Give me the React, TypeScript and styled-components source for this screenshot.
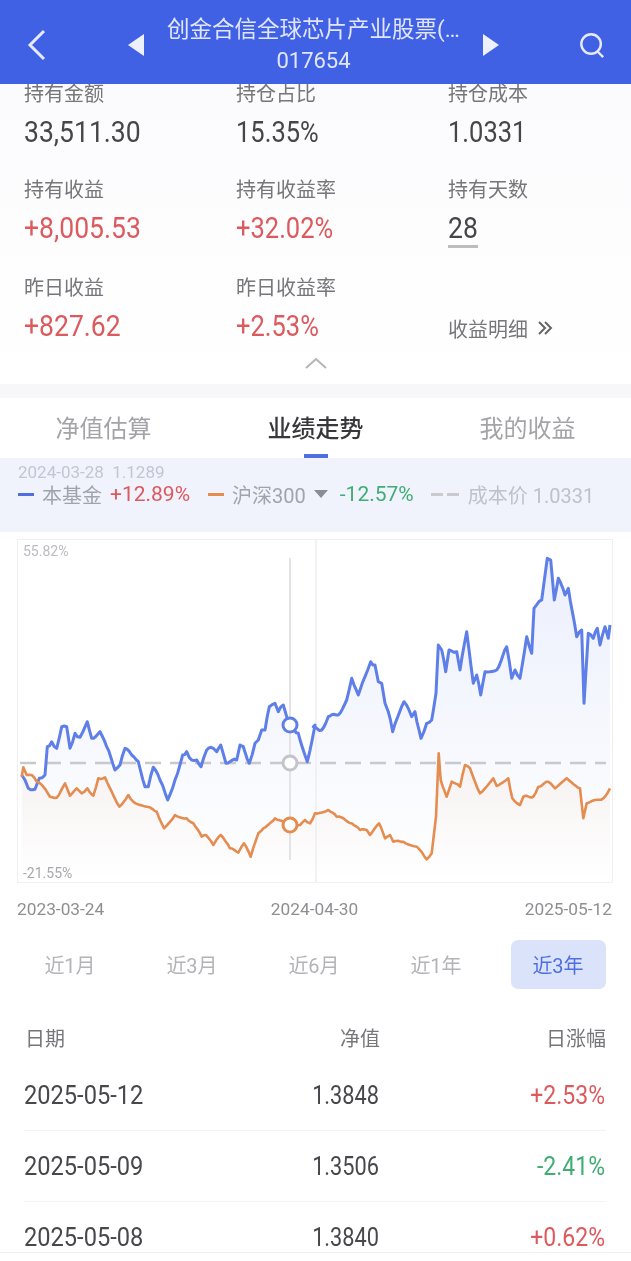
import styled, { createGlobalStyle } from 'styled-components';

const GlobalStyle = createGlobalStyle`
  html, body {
    margin: 0;
    padding: 0;
    background: #fff;
  }
  * {
    box-sizing: border-box;
  }
`;

const FONT = `Roboto, "Noto Sans CJK SC", sans-serif`;
const RED = '#dc5a5e';
const GREEN = '#41ad74';
const BLUE = '#5f7fe8';
const ORANGE = '#e58c50';

// traced from the reference, [x, y] pairs at 3x around the crop origin
const blueA = [65,735,75,750,85,775,105,778,118,745,135,735,142,650,155,635,170,655,185,590,200,590,210,655,225,610,240,622,262,575,275,625,300,605,320,650,345,720,360,705,375,655,395,675,415,695,435,770,445,770,460,712,480,750,503,810,525,750,548,675,560,665,575,690,590,690,603,710,620,660,640,655,650,665,662,645,678,700,710,690,720,645,730,650,748,700,765,640,775,630,785,600,795,600,808,530,825,520,835,545,850,525,860,560,870,585,895,610,922,695,945,585];
const blueB = [10,590,35,600,55,560,85,555,110,510,125,445,145,495,165,440,182,395,195,405,205,455,215,460,225,520,235,545,248,605,282,515,305,560,315,545,333,625,350,580,365,570,378,490,385,345,395,360,407,425,417,360,440,365,450,420,470,305,490,460,500,435,512,495,525,425,560,420,590,350,605,445,615,420,630,445,650,320,665,370,672,235,695,210,712,85,722,90,733,210,745,145,765,195,775,175,800,320,815,300,822,520,835,310,850,325,862,295,870,345,885,290,895,325,900,285];
const orangeA = [65,740,70,712,80,735,95,735,110,755,130,770,150,800,170,803,195,760,210,797,230,775,245,790,262,775,280,797,295,745,315,742,335,785,358,830,385,795,400,815,440,830,470,845,492,895,525,855,560,865,580,880,605,920,618,915,640,945,662,915,690,955,715,968,732,940,752,980,775,910,790,895,825,865,870,885,900,885,915,870,930,880,945,850];
const orangeB = [15,850,55,840,80,860,100,865,125,880,150,900,170,900,180,915,207,880,225,925,240,915,250,935,280,935,320,950,350,988,365,970,378,860,386,670,392,750,410,800,425,755,450,770,465,705,480,715,495,755,510,790,550,745,560,768,595,745,607,805,630,825,640,800,670,800,685,770,715,755,735,775,770,745,810,775,820,865,830,820,880,805,900,775];

// the traced points miss the day-to-day wobble, so add a small repeatable one between them
const toPoints = (left: number[], right: number[], wobble: number) => {
  const pts: number[][] = [];
  for (let i = 0; i < left.length; i += 2) pts.push([left[i] / 3, 530 + left[i + 1] / 3]);
  for (let i = 0; i < right.length; i += 2) pts.push([310 + right[i] / 3, 530 + right[i + 1] / 3]);
  const out: string[] = [];
  pts.forEach((p, i) => {
    out.push(`${p[0].toFixed(1)},${p[1].toFixed(1)}`);
    const next = pts[i + 1];
    if (!next || next[0] - p[0] < 4) return;
    const steps = Math.floor((next[0] - p[0]) / 2);
    for (let s = 1; s < steps; s++) {
      const t = s / steps;
      const x = p[0] + (next[0] - p[0]) * t;
      const y = p[1] + (next[1] - p[1]) * t + Math.sin(x * 2.7) * wobble;
      out.push(`${x.toFixed(1)},${y.toFixed(1)}`);
    }
  });
  return out.join(' ');
};

const bluePoints = toPoints(blueA, blueB, 1.6);
const orangePoints = toPoints(orangeA, orangeB, 0.9);

const stats = [
  [
    { label: '持有金额', value: '33,511.30' },
    { label: '持仓占比', value: '15.35%', narrow: true },
    { label: '持仓成本', value: '1.0331', narrow: true },
  ],
  [
    { label: '持有收益', value: '+8,005.53', up: true },
    { label: '持有收益率', value: '+32.02%', up: true, narrow: true },
    { label: '持有天数', value: '28', underline: true },
  ],
];

const periods = ['近1月', '近3月', '近6月', '近1年', '近3年'];

const rows = [
  { date: '2025-05-12', nav: '1.3848', change: '+2.53%', color: RED },
  { date: '2025-05-09', nav: '1.3506', change: '-2.41%', color: GREEN },
  { date: '2025-05-08', nav: '1.3840', change: '+0.62%', color: RED },
];

function App() {
  return (
    <Page>
      <GlobalStyle />
      <Header>
        <IconSlot>
          <svg width="22" height="32" viewBox="0 0 22 32" fill="none" stroke="#e6eafc" strokeWidth="3">
            <path d="M18 2 L4 16 L18 30" />
          </svg>
        </IconSlot>
        <Triangle viewBox="0 0 16 22"><path d="M16 0 V22 L0 11 Z" /></Triangle>
        <TitleBlock>
          <Title>创金合信全球芯片产业股票(…</Title>
          <Code>017654</Code>
        </TitleBlock>
        <Triangle viewBox="0 0 16 22"><path d="M0 0 V22 L16 11 Z" /></Triangle>
        <IconSlot>
          <svg width="28" height="28" viewBox="0 0 28 28" fill="none" stroke="#e6eafc" strokeWidth="2.6">
            <circle cx="13" cy="13" r="10.5" />
            <path d="M20 21 L26 27" />
          </svg>
        </IconSlot>
      </Header>

      <Stats>
        {stats.map((row, i) => (
          <StatRow key={i}>
            {row.map((cell) => (
              <div key={cell.label}>
                <StatLabel>{cell.label}</StatLabel>
                <StatValue $up={cell.up} $underline={cell.underline} $narrow={cell.narrow}>{cell.value}</StatValue>
              </div>
            ))}
          </StatRow>
        ))}
        <StatRow>
          <div>
            <StatLabel>昨日收益</StatLabel>
            <StatValue $up>+827.62</StatValue>
          </div>
          <div>
            <StatLabel>昨日收益率</StatLabel>
            <StatValue $up $narrow>+2.53%</StatValue>
          </div>
          <DetailLink>
            收益明细
            <svg width="16" height="16" viewBox="0 0 16 16" fill="none" stroke="#666" strokeWidth="2">
              <path d="M2 2 L8 8 L2 14 M8 2 L14 8 L8 14" />
            </svg>
          </DetailLink>
        </StatRow>
        <Collapse>
          <svg width="22" height="12" viewBox="0 0 22 12" fill="none" stroke="#b5b5b8" strokeWidth="2">
            <path d="M1 11 L11 2 L21 11" />
          </svg>
        </Collapse>
      </Stats>
      <Band />

      <Tabs>
        <Tab>净值估算</Tab>
        <Tab $active>业绩走势</Tab>
        <Tab>我的收益</Tab>
      </Tabs>

      <LegendPanel>
        <PointInfo>2024-03-28&nbsp;&nbsp;1.1289</PointInfo>
        <LegendRow>
          <Dash $color="#4f6fe0" />
          <LegendName>本基金</LegendName>
          <LegendNumber $color={RED}>+12.89%</LegendNumber>
          <Dash $color={ORANGE} $gap={18} />
          <LegendName>沪深300</LegendName>
          <LegendCaret />
          <LegendNumber $color={GREEN}>-12.57%</LegendNumber>
          <Dash $color="#c9c9ce" $gap={17} $short />
          <Dash $color="#c9c9ce" $short />
          <CostLabel>成本价 1.0331</CostLabel>
        </LegendRow>
      </LegendPanel>

      <ChartBox>
        <AxisTop>55.82%</AxisTop>
        <AxisBottom>-21.55%</AxisBottom>
        <svg width="594" height="342" viewBox="18 540 594 342" fill="none">
          <defs>
            <linearGradient id="blueFill" x1="0" y1="0" x2="0" y2="1">
              <stop offset="0" stopColor="#5f7fe8" stopOpacity="0.12" />
              <stop offset="1" stopColor="#5f7fe8" stopOpacity="0" />
            </linearGradient>
            <linearGradient id="orangeFill" x1="0" y1="0" x2="0" y2="1">
              <stop offset="0" stopColor="#e58c50" stopOpacity="0.08" />
              <stop offset="1" stopColor="#e58c50" stopOpacity="0" />
            </linearGradient>
          </defs>
          <polygon points={`21.7,880 ${bluePoints} 610,880`} fill="url(#blueFill)" />
          <polygon points={`21.7,880 ${orangePoints} 610,880`} fill="url(#orangeFill)" />
          <path d="M316 540 V882" stroke="#eeeef2" strokeWidth="1.5" />
          <path d="M290 558 V860" stroke="#e3e3e8" strokeWidth="2" />
          <path d="M20 763 H606" stroke="#c8c8cd" strokeWidth="2.5" strokeDasharray="16 9" />
          <polyline points={bluePoints} stroke={BLUE} strokeWidth="3" strokeLinejoin="round" />
          <polyline points={orangePoints} stroke={ORANGE} strokeWidth="2.6" strokeLinejoin="round" />
          <circle cx="290" cy="725" r="7" fill="#fff" stroke={BLUE} strokeWidth="3" />
          <circle cx="290" cy="763" r="7" fill="#fff" stroke="#c4c4c9" strokeWidth="3" />
          <circle cx="290" cy="825" r="7" fill="#fff" stroke={ORANGE} strokeWidth="3" />
        </svg>
      </ChartBox>

      <AxisDates>
        <span>2023-03-24</span>
        <span>2024-04-30</span>
        <span>2025-05-12</span>
      </AxisDates>

      <Periods>
        {periods.map((p) => (
          <Period key={p} $active={p === '近3年'}>{p}</Period>
        ))}
      </Periods>

      <TableHead>
        <span>日期</span>
        <HeadRight>净值</HeadRight>
        <HeadRight>日涨幅</HeadRight>
      </TableHead>
      {rows.map((r) => (
        <TableRow key={r.date}>
          <DateCell>{r.date}</DateCell>
          <NavCell>{r.nav}</NavCell>
          <ChangeCell $color={r.color}>{r.change}</ChangeCell>
        </TableRow>
      ))}
      <BottomEdge />
    </Page>
  );
}

export default App;

const Page = styled.div`
  position: relative;
  width: 631px;
  height: 1261px;
  overflow: hidden;
  background: #fff;
  font-family: ${FONT};
  filter: blur(0.6px);
`;

const Header = styled.div`
  position: relative;
  z-index: 2;
  display: flex;
  align-items: center;
  height: 84px;
  padding: 6px 26px 0 26px;
  background: #4161e4;
`;

const IconSlot = styled.div`
  display: flex;
  align-items: center;
  width: 26px;
  flex-shrink: 0;
`;

const Triangle = styled.svg`
  width: 16px;
  height: 22px;
  margin-left: 76px;
  margin-right: 0;
  fill: #eef1fd;
  flex-shrink: 0;

  & + div + & {
    margin-left: 0;
    margin-right: 80px;
  }
`;

const TitleBlock = styled.div`
  flex: 1;
  min-width: 0;
  display: flex;
  flex-direction: column;
  align-items: center;
  color: #e1e6fb;
`;

const Title = styled.div`
  font-size: 22.5px;
  line-height: 31px;
  white-space: nowrap;
`;

const Code = styled.div`
  font-size: 22px;
  line-height: 31px;
`;

const Stats = styled.div`
  margin-top: -2px;
  padding: 0 0 0 24px;
  background: linear-gradient(#fbfbfd, #ffffff);
`;

const StatRow = styled.div`
  display: grid;
  grid-template-columns: 212px 212px 1fr;
  height: 67px;
  margin-bottom: 29px;

  &:nth-child(2) {
    margin-bottom: 31px;
  }

  &:nth-child(3) {
    margin-bottom: 0;
  }
`;

const StatLabel = styled.div`
  font-size: 20px;
  line-height: 24px;
  color: #76767b;
`;

// the reference digits are a narrow DIN cut, Roboto squeezed sideways is the nearest we have
const StatValue = styled.div<{ $up?: boolean; $underline?: boolean; $narrow?: boolean }>`
  display: table;
  margin-top: 9px;
  font-size: 30px;
  line-height: 34px;
  transform: scaleX(${(p) => (p.$narrow ? 0.85 : 0.885)});
  transform-origin: left center;
  color: ${(p) => (p.$up ? RED : '#45454a')};
  border-bottom: ${(p) => (p.$underline ? '3px solid #bdbdc0' : 'none')};
`;

const DetailLink = styled.div`
  display: flex;
  align-items: center;
  gap: 9px;
  align-self: end;
  height: 30px;
  font-size: 20px;
  color: #77777b;
`;

const Collapse = styled.div`
  display: flex;
  justify-content: center;
  align-items: center;
  height: 41px;
  margin-left: -24px;
  padding-bottom: 1px;
`;

const Band = styled.div`
  height: 14px;
  background: #f7f7f9;
`;

const Tabs = styled.div`
  display: grid;
  grid-template-columns: repeat(3, 212px);
  justify-content: center;
  height: 60px;
`;

const Tab = styled.div<{ $active?: boolean }>`
  position: relative;
  display: flex;
  justify-content: center;
  align-items: center;
  padding-bottom: 4px;
  font-size: 24px;
  font-weight: ${(p) => (p.$active ? 500 : 400)};
  color: ${(p) => (p.$active ? '#38383c' : '#a4a4a8')};

  &::after {
    content: '';
    display: ${(p) => (p.$active ? 'block' : 'none')};
    position: absolute;
    bottom: 0;
    left: 50%;
    width: 24px;
    height: 4px;
    margin-left: -12px;
    background: #4f6fe0;
  }
`;

const LegendPanel = styled.div`
  height: 74px;
  padding: 5px 18px 0;
  background: #f0f3fc;
`;

const PointInfo = styled.div`
  font-size: 17px;
  line-height: 19px;
  color: #c3c6d1;
`;

const LegendRow = styled.div`
  display: flex;
  align-items: center;
  height: 24px;
  white-space: nowrap;
`;

const Dash = styled.i<{ $color: string; $gap?: number; $short?: boolean }>`
  display: block;
  width: ${(p) => (p.$short ? 12 : 16)}px;
  height: 3px;
  margin-left: ${(p) => p.$gap ?? 0}px;
  margin-right: ${(p) => (p.$short ? 4 : 8)}px;
  background: ${(p) => p.$color};
`;

const LegendName = styled.span`
  font-size: 20px;
  color: #a2a3aa;
`;

const LegendNumber = styled.span<{ $color: string }>`
  margin-left: 8px;
  font-size: 21px;
  color: ${(p) => p.$color};
`;

const LegendCaret = styled.i`
  width: 0;
  height: 0;
  margin-left: 8px;
  margin-right: 4px;
  border-left: 7px solid transparent;
  border-right: 7px solid transparent;
  border-top: 8px solid #8c8d93;
`;

const CostLabel = styled.span`
  margin-left: 5px;
  font-size: 20px;
  color: #c0c1c8;
`;

const ChartBox = styled.div`
  position: relative;
  width: 594px;
  height: 342px;
  margin: 8px 0 0 18px;
  outline: 1px solid #f0f0f4;

  svg {
    display: block;
    overflow: visible;
  }
`;

const AxisTop = styled.span`
  position: absolute;
  top: 3px;
  left: 5px;
  font-size: 14px;
  color: #bcbcc0;
`;

const AxisBottom = styled.span`
  position: absolute;
  bottom: 1px;
  left: 5px;
  font-size: 14px;
  color: #a8a8ac;
`;

const AxisDates = styled.div`
  display: flex;
  justify-content: space-between;
  margin: 17px 19px 0 17px;
  font-size: 17.3px;
  line-height: 20px;
  color: #8f8f93;
`;

const Periods = styled.div`
  display: grid;
  grid-template-columns: repeat(5, 122px);
  margin: 21px 0 0 9px;
`;

const Period = styled.div<{ $active?: boolean }>`
  justify-self: center;
  display: flex;
  justify-content: center;
  align-items: center;
  width: 95px;
  height: 49px;
  border-radius: 7px;
  font-size: 20px;
  background: ${(p) => (p.$active ? '#dbe3fb' : 'transparent')};
  color: ${(p) => (p.$active ? '#4f6fe0' : '#b4b4b8')};
`;

const TableHead = styled.div`
  display: grid;
  grid-template-columns: 200px 155px 226px;
  margin: 36px 25px 7px;
  font-size: 20px;
  line-height: 28px;
  color: #77777b;
`;

const HeadRight = styled.span`
  text-align: right;
`;

const TableRow = styled.div`
  display: grid;
  grid-template-columns: 200px 155px 226px;
  align-items: center;
  height: 71px;
  margin: 0 25px 0 24px;
  font-size: 25px;
  color: #48484c;
  border-bottom: 1px solid #f4f4f6;
`;

const DateCell = styled.span`
  transform: scaleX(0.945);
  transform-origin: left center;
`;

const NavCell = styled.span`
  text-align: right;
  transform: scaleX(0.87);
  transform-origin: right center;
`;

const ChangeCell = styled.span<{ $color: string }>`
  text-align: right;
  transform: scaleX(0.92);
  transform-origin: right center;
  color: ${(p) => p.$color};
`;

const BottomEdge = styled.div`
  position: absolute;
  left: 0;
  right: 0;
  bottom: 0;
  height: 9px;
  background: #fff;
  border-top: 1px solid #f0f0f2;
`;
